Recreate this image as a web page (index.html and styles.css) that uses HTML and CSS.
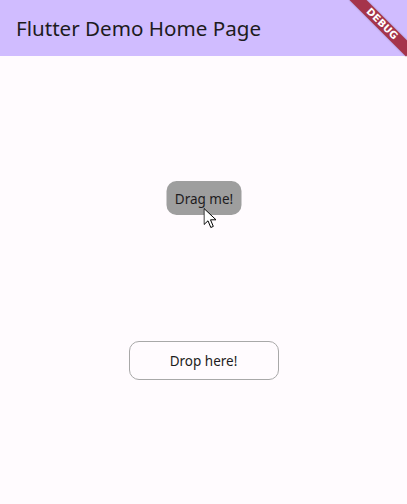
FILE: index.html
```html
<!DOCTYPE html>
<html lang="en">
<head>
  <meta charset="UTF-8">
  <meta name="viewport" content="width=device-width, initial-scale=1.0">
  <title>Flutter Demo Home Page</title>
  <link rel="stylesheet" href="styles.css">
</head>
<body>
  <div class="app">
    <header class="app-bar">
      <h1 class="title">Flutter Demo Home Page</h1>
    </header>
    <main class="content">
      <div class="draggable">
        Drag me!
        <svg class="cursor" width="14" height="22" viewBox="0 0 14 22">
          <path d="M0.5 0.5 L0.5 16.5 L4.5 12.8 L7.3 19.5 L9.8 18.4 L7 11.8 L12.5 11.8 Z" fill="#fff" stroke="#000" stroke-width="1" stroke-linejoin="round"/>
        </svg>
      </div>
      <div class="target">Drop here!</div>
    </main>
    <div class="debug-banner">DEBUG</div>
  </div>
</body>
</html>
```

FILE: styles.css
```css
body {
  margin: 0;
  padding: 0;
  background: #fffbfe;
  font-family: "Noto Sans", "Open Sans", sans-serif;
  overflow: hidden;
}

.app {
  position: relative;
  width: 407px;
  height: 504px;
  overflow: hidden;
}

.app-bar {
  height: 56px;
  background: #d0bcff;
  display: flex;
  align-items: center;
  padding: 0 16px;
}

.title {
  margin: 0;
  font-size: 20.6px;
  font-weight: 400;
  color: #1d1b20;
}

.content {
  display: flex;
  flex-direction: column;
  align-items: center;
  padding-top: 125px;
}

.draggable {
  position: relative;
  box-sizing: border-box;
  width: 75px;
  height: 34px;
  padding-top: 2px;
  transform: translateX(0.5px);
  border-radius: 10px;
  background: #9e9e9e;
  color: #1d1b20;
  font-size: 13.5px;
  display: flex;
  align-items: center;
  justify-content: center;
}

.cursor {
  position: absolute;
  left: 37px;
  top: 27px;
}

.target {
  margin-top: 126px;
  width: 148px;
  height: 37px;
  border: 1px solid #a8a8a8;
  border-radius: 10px;
  color: #1d1b20;
  font-size: 13.5px;
  display: flex;
  align-items: center;
  justify-content: center;
}

.debug-banner {
  position: absolute;
  left: 342px;
  top: 18px;
  width: 80px;
  height: 12px;
  transform: rotate(45deg);
  background: #a5344b;
  box-shadow: 0 0 2px rgba(0, 0, 0, 0.3);
  color: #fff;
  font-family: "DejaVu Sans", sans-serif;
  font-size: 10px;
  font-weight: 700;
  line-height: 12px;
  text-align: center;
  letter-spacing: 0.2px;
}
```
